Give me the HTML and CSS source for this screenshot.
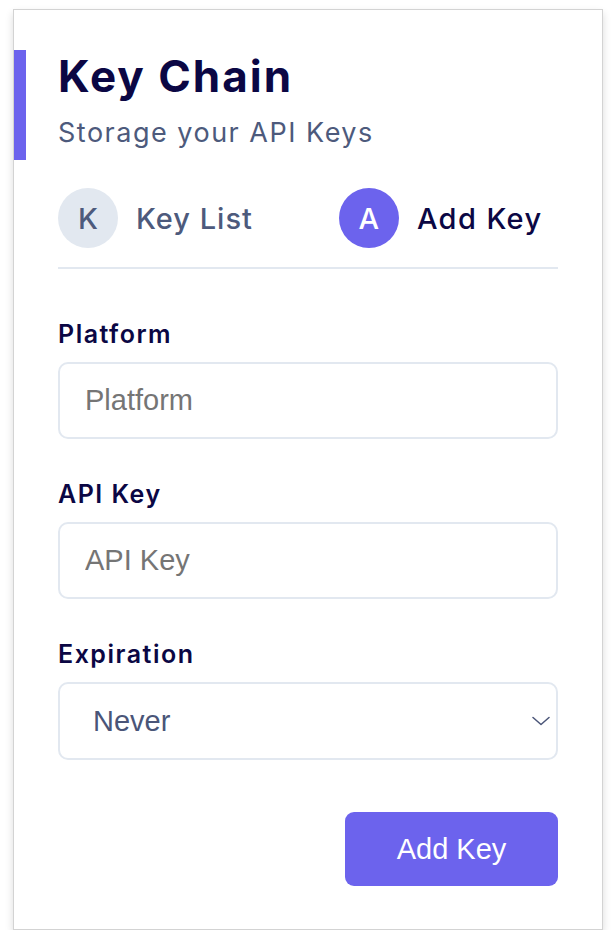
FILE: index.html
```html
<!DOCTYPE html>
<html lang="en">
<head>
<meta charset="utf-8">
<title>Key Chain</title>
<link rel="stylesheet" href="styles.css">
</head>
<body>
<div class="card">
  <header class="header">
    <h1 class="title">Key Chain</h1>
    <p class="subtitle">Storage your API Keys</p>
  </header>
  <div class="body">
    <nav class="tabs">
      <div class="tab">
        <span class="badge">K</span>
        <span class="tab-label">Key List</span>
      </div>
      <div class="tab tab-active">
        <span class="badge">A</span>
        <span class="tab-label">Add Key</span>
      </div>
    </nav>
    <form class="form">
      <div class="field">
        <label class="label" for="platform">Platform</label>
        <input class="input" id="platform" type="text" placeholder="Platform">
      </div>
      <div class="field">
        <label class="label" for="apikey">API Key</label>
        <input class="input" id="apikey" type="text" placeholder="API Key">
      </div>
      <div class="field">
        <label class="label" for="expiration">Expiration</label>
        <div class="select-wrap">
          <select class="select" id="expiration">
            <option>Never</option>
            <option>1 day</option>
            <option>1 week</option>
            <option>1 month</option>
          </select>
          <svg class="chevron" width="18" height="10" viewBox="0 0 18 10" aria-hidden="true">
            <path d="M1 1.5 L9 8.5 L17 1.5" fill="none" stroke="#4a5578" stroke-width="1.5" stroke-linecap="round" stroke-linejoin="round"/>
          </svg>
        </div>
      </div>
      <div class="actions">
        <button class="button" type="button">Add Key</button>
      </div>
    </form>
  </div>
</div>
</body>
</html>
```
FILE: styles.css
```css
* { box-sizing: border-box; }

html, body {
  margin: 0;
  padding: 0;
  background: #ffffff;
}

body {
  font-family: Inter, "Noto Sans", sans-serif;
  padding: 9px 13px 0 13px;
}

.card {
  width: 590px;
  height: 921px;
  border: 1px solid #d3d3d3;
  background: #ffffff;
  box-shadow: 0 4px 8px rgba(0, 0, 0, 0.14);
  padding-top: 40px;
}

.header {
  border-left: 12px solid #6c63ed;
  padding-left: 32px;
  height: 110px;
}

.title {
  margin: 0;
  font-size: 44px;
  line-height: 1.2;
  font-weight: 700;
  letter-spacing: 2px;
  color: #0b0744;
}

.subtitle {
  margin: 10px 0 0 0;
  font-size: 27px;
  line-height: 39px;
  font-weight: 400;
  letter-spacing: 1.5px;
  color: #4d5a7c;
}

.body {
  padding: 28px 44px 0 44px;
}

.tabs {
  display: flex;
  gap: 86px;
  padding-bottom: 19px;
  border-bottom: 2px solid #e2e8f0;
}

.tab {
  display: flex;
  align-items: center;
  gap: 18px;
}

.badge {
  width: 60px;
  height: 60px;
  border-radius: 50%;
  background: #e2e8f0;
  color: #4d5a7c;
  display: flex;
  align-items: center;
  justify-content: center;
  font-size: 29px;
  font-weight: 500;
}

.tab-label {
  font-size: 29px;
  font-weight: 500;
  letter-spacing: 1px;
  color: #4d5a7c;
}

.tab-active .badge {
  background: #6c63ed;
  color: #ffffff;
}

.tab-active .tab-label {
  color: #0b0744;
  letter-spacing: 1.4px;
}

.form {
  display: flex;
  flex-direction: column;
  gap: 40px;
  padding-top: 50px;
}

.field {
  display: flex;
  flex-direction: column;
  gap: 13px;
}

.label {
  font-size: 25px;
  line-height: 30px;
  font-weight: 600;
  letter-spacing: 1.5px;
  color: #0b0744;
}

.input {
  width: 100%;
  height: 77px;
  border: 2px solid #e2e8f0;
  border-radius: 10px;
  padding: 0 25px;
  font-family: "Liberation Sans", Arial, sans-serif;
  font-size: 29px;
  color: #333;
  background: #fff;
  outline: none;
}

.input::placeholder {
  color: #757575;
}

.select-wrap {
  position: relative;
}

.select {
  width: 100%;
  height: 78px;
  border: 2px solid #e2e8f0;
  border-radius: 10px;
  padding: 0 40px 0 33px;
  font-family: "Liberation Sans", Arial, sans-serif;
  font-size: 29px;
  color: #4a5578;
  background: #fff;
  appearance: none;
  -webkit-appearance: none;
  outline: none;
}

.chevron {
  position: absolute;
  right: 8px;
  top: 34px;
  pointer-events: none;
}

.actions {
  display: flex;
  justify-content: flex-end;
  margin-top: 12px;
}

.button {
  width: 213px;
  height: 74px;
  border: none;
  border-radius: 9px;
  background: #6c63ed;
  color: #ffffff;
  font-family: "Liberation Sans", Arial, sans-serif;
  font-size: 29px;
  cursor: pointer;
}
```
